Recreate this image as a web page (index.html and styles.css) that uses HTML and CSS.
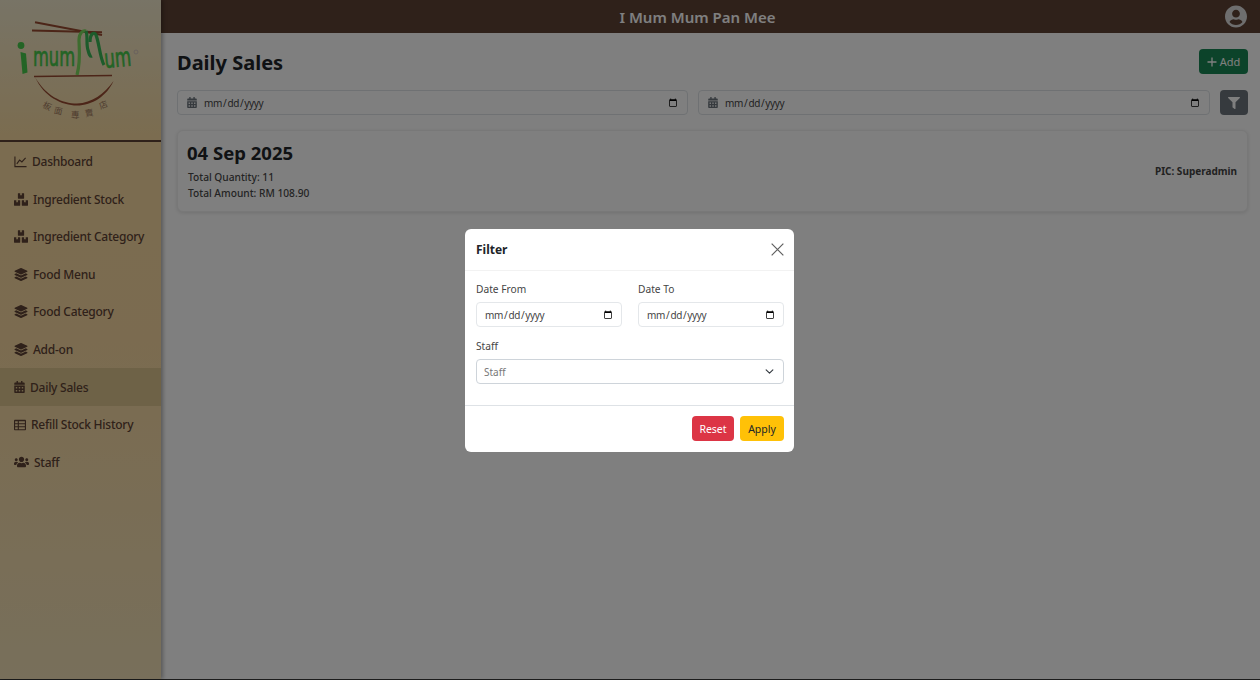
FILE: index.html
```html
<!DOCTYPE html>
<html lang="en">
<head>
<meta charset="utf-8">
<title>Daily Sales</title>
<link rel="stylesheet" href="styles.css">
</head>
<body>
<svg class="defs" aria-hidden="true">
  <symbol id="i-boxes" viewBox="0 0 576 512"><path d="M560 288h-80v96l-32-21.3-32 21.3v-96h-80c-8.800 0-16 7.200-16 16v192c0 8.800 7.200 16 16 16h224c8.800 0 16-7.200 16-16V304c0-8.800-7.200-16-16-16zm-384-64h224c8.800 0 16-7.200 16-16V16c0-8.800-7.200-16-16-16h-80v96l-32-21.300L256 96V0h-80c-8.800 0-16 7.200-16 16v192c0 8.800 7.200 16 16 16zm64 64h-80v96l-32-21.300L96 384v-96H16c-8.800 0-16 7.200-16 16v192c0 8.800 7.200 16 16 16h224c8.800 0 16-7.200 16-16V304c0-8.800-7.200-16-16-16z"/></symbol>
  <symbol id="i-layers" viewBox="0 0 512 512"><path d="M12.410 148.020l232.940 105.670c6.800 3.090 14.490 3.090 21.290 0l232.940-105.670c16.550-7.510 16.550-32.520 0-40.030L266.650 2.310a25.607 25.607 0 0 0-21.290 0L12.410 107.980c-16.550 7.510-16.550 32.530 0 40.040zm487.180 88.280l-58.090-26.330-161.640 73.270c-7.560 3.430-15.590 5.170-23.860 5.170s-16.290-1.740-23.860-5.170L70.510 209.970l-58.100 26.330c-16.550 7.500-16.550 32.500 0 40l232.940 105.590c6.800 3.080 14.490 3.080 21.290 0L499.590 276.300c16.550-7.500 16.550-32.500 0-40zm0 127.800l-57.870-26.230-161.860 73.370c-7.560 3.430-15.590 5.170-23.860 5.170s-16.290-1.740-23.860-5.170L70.290 337.870 12.410 364.100c-16.550 7.500-16.550 32.500 0 40l232.940 105.590c6.800 3.080 14.490 3.080 21.290 0L499.590 404.100c16.550-7.500 16.550-32.500 0-40z"/></symbol>
  <symbol id="i-calendar" viewBox="0 0 448 512"><path d="M0 464c0 26.500 21.500 48 48 48h352c26.500 0 48-21.500 48-48V192H0v272zm320-196c0-6.600 5.400-12 12-12h40c6.600 0 12 5.400 12 12v40c0 6.600-5.400 12-12 12h-40c-6.600 0-12-5.400-12-12v-40zm0 128c0-6.600 5.400-12 12-12h40c6.600 0 12 5.400 12 12v40c0 6.600-5.400 12-12 12h-40c-6.600 0-12-5.400-12-12v-40zM192 268c0-6.600 5.400-12 12-12h40c6.600 0 12 5.400 12 12v40c0 6.600-5.400 12-12 12h-40c-6.600 0-12-5.400-12-12v-40zm0 128c0-6.600 5.400-12 12-12h40c6.600 0 12 5.400 12 12v40c0 6.600-5.400 12-12 12h-40c-6.600 0-12-5.400-12-12v-40zM64 268c0-6.600 5.400-12 12-12h40c6.600 0 12 5.400 12 12v40c0 6.600-5.400 12-12 12H76c-6.600 0-12-5.400-12-12v-40zm0 128c0-6.600 5.400-12 12-12h40c6.600 0 12 5.400 12 12v40c0 6.600-5.400 12-12 12H76c-6.600 0-12-5.400-12-12v-40zM400 64h-48V16c0-8.800-7.200-16-16-16h-32c-8.800 0-16 7.200-16 16v48H160V16c0-8.800-7.200-16-16-16h-32c-8.800 0-16 7.200-16 16v48H48C21.500 64 0 85.500 0 112v48h448v-48c0-26.500-21.500-48-48-48z"/></symbol>
</svg>

<div class="app">
  <aside class="sidebar">
    <div class="logo">
      <svg class="logo-svg" viewBox="0 0 161 140" role="img" aria-label="I Mum Mum logo">
        <g class="sticks">
          <path d="M35 22.300 L102 35"/>
          <path d="M32 30.500 L102 32.200"/>
        </g>
        <circle class="dot-green" cx="21" cy="45.500" r="3.400"/>
        <path class="stem" d="M20.500 52 L26 53.500 L27.500 72.500 L22.500 74 Z"/>
        <text class="logo-text" x="33" y="66" textLength="42" lengthAdjust="spacingAndGlyphs">mum</text>
        <text class="logo-text" x="105" y="68" textLength="27" lengthAdjust="spacingAndGlyphs" transform="rotate(-5 105 68)">um</text>
        <path class="noodle-light" d="M77 75 C81 60 79 48 79 40 C79 33 83 30 86 31"/>
        <path class="noodle-dark" d="M86 31 C88 36 86 44 88 50 C89 54 90 57 92 56"/>
        <path class="noodle-dark" d="M90 42 C90 34 94 31 96 35 C99 42 100 58 104 65"/>
        <circle class="reg" cx="136" cy="52" r="2"/>
        <path class="bowl-rim" d="M34 76.500 L112 75.500"/>
        <path class="bowl" d="M35 77 C44 97 62 105.500 77 105.500 C92 105.500 107 96 113.500 81 C104 94 92 103 77 103.500 C62 103.500 46 96 35 77 Z"/>
        <g class="cjk">
          <text x="43" y="109" transform="rotate(25 47 106)">板</text>
          <text x="54" y="114" transform="rotate(12 58 111)">面</text>
          <text x="71" y="118">專</text>
          <text x="85" y="116" transform="rotate(-10 89 113)">賣</text>
          <text x="99" y="108" transform="rotate(-22 103 105)">店</text>
        </g>
      </svg>
    </div>
    <nav class="menu">
      <a class="menu-item"><svg class="ic ic-line" viewBox="0 0 14 14"><path d="M1 1.500V12.500H13.500"/><path d="M3 9.500L6 5.500L8.500 7.500L12.500 3"/></svg><span>Dashboard</span></a>
      <a class="menu-item"><svg class="ic ic-box"><use href="#i-boxes"/></svg><span>Ingredient Stock</span></a>
      <a class="menu-item"><svg class="ic ic-box"><use href="#i-boxes"/></svg><span>Ingredient Category</span></a>
      <a class="menu-item"><svg class="ic ic-box"><use href="#i-layers"/></svg><span>Food Menu</span></a>
      <a class="menu-item"><svg class="ic ic-box"><use href="#i-layers"/></svg><span>Food Category</span></a>
      <a class="menu-item"><svg class="ic ic-box"><use href="#i-layers"/></svg><span>Add-on</span></a>
      <a class="menu-item active"><svg class="ic ic-cal"><use href="#i-calendar"/></svg><span>Daily Sales</span></a>
      <a class="menu-item"><svg class="ic ic-tbl" viewBox="0 0 512 512"><path d="M464 32H48C21.490 32 0 53.490 0 80v352c0 26.510 21.490 48 48 48h416c26.510 0 48-21.490 48-48V80c0-26.510-21.490-48-48-48zM160 432H48V352h112v80zm0-128H48v-80h112v80zm0-128H48V96h112v80zm304 256H208v-80h256v80zm0-128H208v-80h256v80zm0-128H208V96h256v80z"/></svg><span>Refill Stock History</span></a>
      <a class="menu-item"><svg class="ic ic-users" viewBox="0 0 640 512"><path d="M96 224c35.300 0 64-28.700 64-64s-28.700-64-64-64-64 28.700-64 64 28.700 64 64 64zm448 0c35.300 0 64-28.700 64-64s-28.700-64-64-64-64 28.700-64 64 28.700 64 64 64zm32 32h-64c-17.600 0-33.500 7.100-45.100 18.600 40.300 22.100 68.900 62 75.100 109.400h66c17.700 0 32-14.300 32-32v-32c0-35.300-28.700-64-64-64zm-256 0c61.900 0 112-50.100 112-112S381.900 32 320 32 208 82.100 208 144s50.100 112 112 112zm76.800 32h-8.300c-20.800 10-43.900 16-68.500 16s-47.600-6-68.500-16h-8.300C179.600 288 128 339.600 128 403.200V432c0 26.500 21.500 48 48 48h288c26.500 0 48-21.500 48-48v-28.800c0-63.600-51.600-115.200-115.200-115.200zm-223.700-13.400C161.500 263.100 145.600 256 128 256H64c-35.300 0-64 28.700-64 64v32c0 17.700 14.300 32 32 32h65.900c6.300-47.400 34.900-87.300 75.200-109.400z"/></svg><span>Staff</span></a>
    </nav>
  </aside>

  <div class="main">
    <header class="topbar">
      <div class="brand">I Mum Mum Pan Mee</div>
      <svg class="avatar" viewBox="0 0 496 512"><path d="M248 8C111 8 0 119 0 256s111 248 248 248 248-111 248-248S385 8 248 8zm0 96c48.600 0 88 39.400 88 88s-39.400 88-88 88-88-39.400-88-88 39.400-88 88-88zm0 344c-58.700 0-111.300-26.600-146.500-68.200 18.800-35.400 55.600-59.800 98.500-59.800 2.400 0 4.800.4 7.100 1.100 13 4.200 26.600 6.900 40.900 6.900 14.300 0 28-2.700 40.900-6.900 2.300-.7 4.700-1.100 7.100-1.100 42.900 0 79.700 24.400 98.500 59.800C359.300 421.400 306.700 448 248 448z"/></svg>
    </header>
    <main class="content">
      <div class="page-head">
        <h1>Daily Sales</h1>
        <button class="btn btn-add"><svg class="plus" viewBox="0 0 10 10"><path d="M5 .5V9.500M.5 5H9.500"/></svg>Add</button>
      </div>
      <div class="filters">
        <label class="date-wrap"><svg class="date-ic"><use href="#i-calendar"/></svg><input class="date-plain" type="date"></label>
        <label class="date-wrap"><svg class="date-ic"><use href="#i-calendar"/></svg><input class="date-plain" type="date"></label>
        <button class="btn btn-filter"><svg viewBox="0 0 512 512"><path d="M487.976 0H24.028C2.710 0-8.047 25.866 7.058 40.971L192 225.941V432c0 7.831 3.821 15.170 10.237 19.662l80 55.980C298.020 518.690 320 507.493 320 487.980V225.941l184.947-184.970C520.021 25.896 509.338 0 487.976 0z"/></svg></button>
      </div>
      <section class="card">
        <div>
          <h2>04 Sep 2025</h2>
          <p>Total Quantity: 11</p>
          <p>Total Amount: RM 108.90</p>
        </div>
        <div class="pic">PIC: Superadmin</div>
      </section>
    </main>
  </div>
</div>
<div class="page-edge"></div>

<div class="backdrop"></div>
<div class="modal" role="dialog" aria-label="Filter">
  <div class="modal-head">
    <h3>Filter</h3>
    <svg class="close" viewBox="0 0 12 12"><path d="M.6 .6L11.400 11.400M11.400 .6L.6 11.400"/></svg>
  </div>
  <div class="modal-body">
    <div class="row">
      <div class="field"><label>Date From</label><input class="control" type="date"></div>
      <div class="field"><label>Date To</label><input class="control" type="date"></div>
    </div>
    <div class="field"><label>Staff</label><select class="control select"><option>Staff</option></select></div>
  </div>
  <div class="modal-foot">
    <button class="btn btn-reset">Reset</button>
    <button class="btn btn-apply">Apply</button>
  </div>
</div>
</body>
</html>
```
FILE: styles.css
```css
* { box-sizing: border-box; }
html, body { height: 100%; }
body {
  margin: 0;
  font-family: "Noto Sans", "Noto Sans CJK SC", sans-serif;
  color: #212529;
  background: #fff;
  overflow: hidden;
}
.defs { width: 0; height: 0; position: absolute; }
.app { display: flex; height: 679px; }
.page-edge { height: 1px; background: #3a3a3a; }

.sidebar {
  width: 161px;
  flex: none;
  background: linear-gradient(180deg, #f0e8cc 0%, #f6d9a0 20%, #f6d7a0 50%, #f0dfb6 100%);
  box-shadow: 2px 0 4px rgba(0,0,0,.3);
  position: relative;
  z-index: 1;
}
.logo { height: 142px; border-bottom: 2px solid #5e4234; }
.logo-svg { display: block; width: 161px; height: 140px; }
.sticks path { stroke: #984a30; stroke-width: 2; fill: none; }
.dot-green { fill: #46c84a; }
.stem { fill: #46c84a; }
.logo-text { font-family: "DejaVu Sans", sans-serif; font-size: 26px; fill: #46c84a; stroke: #46c84a; stroke-width: .7; }
.noodle-light { stroke: #7cd85e; stroke-width: 3.200; fill: none; }
.noodle-dark { stroke: #38b656; stroke-width: 3.200; fill: none; }
.reg { fill: none; stroke: #cbb; stroke-width: .8; }
.bowl-rim { stroke: #984a30; stroke-width: 1.400; fill: none; }
.bowl { fill: #984a30; }
.cjk text { font-family: "Noto Sans CJK TC", sans-serif; font-size: 8.500px; fill: #a07a60; }

.menu { display: flex; flex-direction: column; padding-top: .7px; }
.menu-item {
  display: flex;
  align-items: center;
  height: 37.600px;
  padding-left: 14px;
  font-size: 12px;
  font-weight: 500;
  letter-spacing: -.25px;
  color: #5e4234;
  gap: 5px;
}
.menu-item.active { background: #dcc48e; }
.ic { fill: #5e4234; flex: none; }
.ic-line { width: 13px; height: 13px; fill: none; stroke: #5e4234; stroke-width: 1.200; }
.ic-box { width: 14px; height: 13px; }
.ic-cal { width: 11px; height: 12px; }
.ic-tbl { width: 12px; height: 12px; }
.ic-users { width: 15px; height: 12px; }

.main { flex: 1; min-width: 0; display: flex; flex-direction: column; }
.topbar {
  height: 33px;
  flex: none;
  display: flex;
  align-items: center;
  padding: 0 13px 0 9px;
  background: #5e4234;
}
.brand { flex: 1; text-align: center; color: #fff; font-size: 15px; font-weight: 600; }
.avatar { width: 22px; height: 23px; fill: #ddd; }

.content { padding: 16px 12px 0 16px; flex: 1; }
.page-head { display: flex; justify-content: space-between; align-items: center; height: 25px; }
h1 { margin: 3px 0 0; font-size: 20px; font-weight: 700; line-height: 1; }
.btn { border: 0; border-radius: 4px; font-family: inherit; display: inline-flex; align-items: center; justify-content: center; padding: 0; }
.btn-add { width: 49px; height: 25px; background: #198754; color: #fff; font-size: 11px; gap: 3px; }
.plus { width: 10px; height: 10px; fill: none; stroke: #fff; stroke-width: 1.300; }

.filters { display: grid; grid-template-columns: 511px 512px 28px; gap: 10px; margin-top: 16px; }
.date-wrap {
  height: 25px;
  display: flex;
  align-items: center;
  gap: 6px;
  padding: 0 7px 0 9px;
  border: 1px solid #dee2e6;
  border-radius: 4px;
  background: #fff;
}
.date-ic { width: 10px; height: 11px; fill: #6c757d; flex: none; }
.date-plain { flex: 1; min-width: 0; border: 0; padding: 0; font: 10px "Noto Sans", sans-serif; letter-spacing: -.35px; color: #444; background: transparent; outline: 0; }
.btn-filter { width: 28px; height: 25px; background: #6c757d; border-radius: 4px; }
.btn-filter svg { width: 12px; height: 12px; fill: #fff; }

.card {
  margin-top: 15px;
  height: 82px;
  padding: 12px 10px;
  display: flex;
  justify-content: space-between;
  align-items: center;
  border-radius: 6px;
  background: #fff;
  box-shadow: 0 1px 4px rgba(0,0,0,.12);
  border: 1px solid #f1f1f1;
}
h2 { margin: 0 0 5px -1px; font-size: 18.500px; font-weight: 700; line-height: 22px; }
.card p { margin: 0; font-size: 10.200px; font-weight: 500; line-height: 16px; color: #484848; }
.pic { font-size: 10px; font-weight: 700; color: #444; }

.backdrop { position: fixed; inset: 0; background: rgba(0,0,0,.5); z-index: 5; }
.modal {
  position: fixed;
  left: 465px;
  top: 229px;
  width: 329px;
  height: 223px;
  background: #fff;
  border-radius: 6px;
  z-index: 6;
  display: flex;
  flex-direction: column;
}
.modal-head {
  height: 42px;
  flex: none;
  display: flex;
  align-items: center;
  justify-content: space-between;
  padding: 0 10px 0 11px;
  border-bottom: 1px solid #f2f2f2;
}
h3 { margin: 0; font-size: 12px; font-weight: 700; color: #212529; }
.close { width: 13px; height: 13px; fill: none; stroke: #5f5f5f; stroke-width: 1.100; }
.modal-body { flex: 1; padding: 11px 10px 0 11px; display: flex; flex-direction: column; gap: 12px; }
.row { display: flex; gap: 16px; }
.row .field { flex: 1; min-width: 0; }
.field label { display: block; font-size: 10.200px; line-height: 14px; margin-bottom: 6px; color: #444; }
.control {
  display: block;
  width: 100%;
  height: 25px;
  padding: 0 6px 0 7px;
  border: 1px solid #e4e7ea;
  border-radius: 4px;
  font: 10px "Noto Sans", sans-serif;
  letter-spacing: -.35px;
  color: #444;
  background-color: #fff;
  outline: 0;
}
.select {
  appearance: none;
  color: #777;
  border-color: #ced4da;
  background-image: url("data:image/svg+xml,%3csvg xmlns='http://www.w3.org/2000/svg' viewBox='0 0 16 16'%3e%3cpath fill='none' stroke='%23343a40' stroke-linecap='round' stroke-linejoin='round' stroke-width='2' d='m2 5 6 6 6-6'/%3e%3c/svg%3e");
  background-repeat: no-repeat;
  background-position: right 9px center;
  background-size: 9px 9px;
  letter-spacing: 0;
}
.modal-foot {
  height: 47px;
  flex: none;
  border-top: 1px solid #dee2e6;
  display: flex;
  justify-content: flex-end;
  align-items: center;
  gap: 6px;
  padding: 0 10px 2px;
}
.btn-reset, .btn-apply { height: 25px; padding-top: 1px; font-size: 10.500px; }
.btn-reset { width: 42px; background: #dc3545; color: #fff; }
.btn-apply { width: 44px; background: #ffc107; color: #212529; }
```
